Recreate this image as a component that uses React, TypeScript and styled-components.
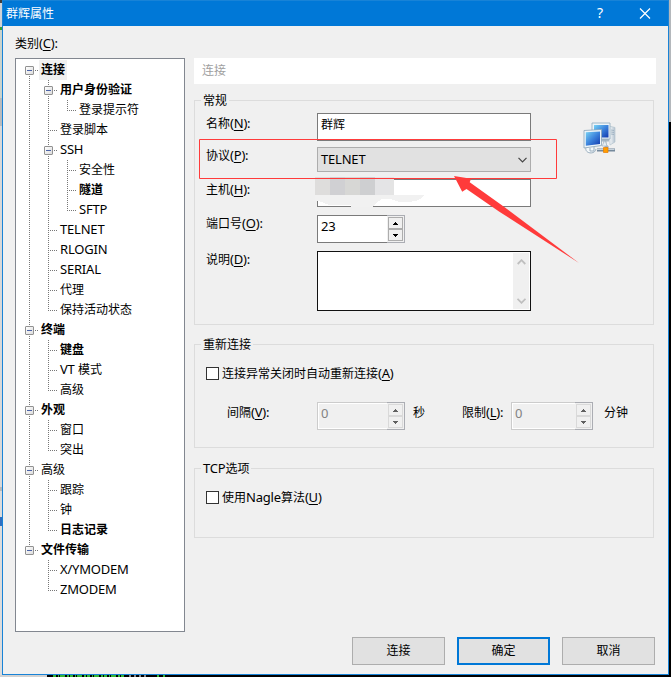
import React from "react";
import styled, { createGlobalStyle, css } from "styled-components";

const GlobalStyle = createGlobalStyle`
  * { box-sizing: border-box; }
  body {
    margin: 0;
    overflow: hidden;
    background: #000;
    color: #000;
    font: 12px/18px "Noto Sans CJK SC", sans-serif;
  }
`;

/* ---------- text ---------- */

const Latin = styled.span`
  font-family: "Noto Sans", sans-serif;
  font-size: 13px;
  line-height: 1;
  letter-spacing: -0.2px;
`;

const Key = styled.span`
  text-decoration: underline;
  text-underline-offset: 2px;
`;

function Mixed({ children }: { children: string }) {
  return (
    <>
      {children.split(/([A-Za-z0-9/]+)/).map((part, i) => (i % 2 ? <Latin key={i}>{part}</Latin> : part))}
    </>
  );
}

function Mnemonic({ text, hotkey, colon }: { text: string; hotkey: string; colon?: boolean }) {
  return (
    <>
      <Mixed>{text}</Mixed>
      <Latin>
        (<Key>{hotkey}</Key>){colon ? ":" : ""}
      </Latin>
    </>
  );
}

/* ---------- window ---------- */

const Desktop = styled.div`
  width: 671px;
  height: 677px;
  padding: 0 2px 2px;
  position: relative;
  background:
    linear-gradient(#b4b8bc 0 122px, #000 122px) right / 2px 100% no-repeat,
    linear-gradient(90deg, #d2d2d2 47px, #000 47px) bottom / 100% 2px no-repeat,
    linear-gradient(#3c3c3c 0 3px, #cfd3d7 3px 27px, #35a035 27px 30px, #cbd3cc 30px 98px, #b9bbbd 98px 126px,
      #d8d8d8 126px 487px, #b9b9b9 487px 491px, #dcdcdc 491px 517px, #2f6fc0 517px 526px, #dcdcdc 526px) left / 2px 100% no-repeat;
`;

const TerminalEdge = styled.svg`
  position: absolute;
  left: 53px;
  bottom: 0;
`;

const Dialog = styled.div`
  height: 675px;
  border: 1px solid #1883d7;
  background: #f0f0f0;
  display: flex;
  flex-direction: column;
`;

const TitleBar = styled.header`
  height: 25px;
  flex: none;
  display: flex;
  align-items: center;
  padding: 0 17px 0 3px;
  background: #0078d7;
  color: #fff;
`;

const Title = styled.span`
  flex: 1;
  padding-bottom: 2px;
`;

const HelpButton = styled.span`
  font: 14px/18px "Noto Sans", sans-serif;
  width: 42px;
  padding-bottom: 2px;
`;

const Body = styled.main`
  flex: 1;
  display: grid;
  grid-template-columns: 170px 462px;
  column-gap: 9px;
  padding: 8px 12px 0;
  align-content: start;
`;

const CategoryLabel = styled.div`
  grid-column: 1 / -1;
  height: 24px;
`;

/* ---------- tree ---------- */

const TreeBox = styled.div`
  height: 574px;
  background: #fff;
  border: 1px solid #828790;
  padding: 1px 0 0 4px;
`;

const TreeRow = styled.div`
  display: flex;
  height: 20px;
`;

const vDots = "repeating-linear-gradient(180deg, #777 0 1px, transparent 1px 2px)";
const hDots = "repeating-linear-gradient(90deg, #777 0 1px, transparent 1px 2px)";

const Guide = styled.span<{ $kind: "none" | "pass" | "tee" | "end" | "first" }>`
  width: 19px;
  height: 20px;
  flex: none;
  display: flex;
  align-items: center;
  padding-left: 5px;
  ${(p) => p.$kind === "pass" && css`background: ${vDots} 9px 0 / 1px 20px no-repeat;`}
  ${(p) => p.$kind === "tee" && css`background: ${vDots} 9px 0 / 1px 20px no-repeat, ${hDots} 11px 10px / 7px 1px no-repeat;`}
  ${(p) => p.$kind === "end" && css`background: ${vDots} 9px 0 / 1px 11px no-repeat, ${hDots} 11px 10px / 7px 1px no-repeat;`}
  ${(p) => p.$kind === "first" && css`background: ${vDots} 9px 10px / 1px 10px no-repeat, ${hDots} 11px 10px / 7px 1px no-repeat;`}
`;

const Expander = styled.span`
  width: 9px;
  height: 9px;
  margin-top: 1px;
  border: 1px solid #919191;
  border-radius: 1px;
  background: linear-gradient(#4b63a7, #4b63a7) center / 5px 1px no-repeat, linear-gradient(135deg, #fff, #dcdcdc);
`;

const NodeLabel = styled.span<{ $bold?: boolean; $selected?: boolean }>`
  padding: 0 2px;
  line-height: 18px;
  white-space: nowrap;
  font-weight: ${(p) => (p.$bold ? 700 : 400)};
  background: ${(p) => (p.$selected ? "#f0f0f0" : "transparent")};
`;

type Node = { label: string; bold?: boolean; selected?: boolean; children?: Node[] };

const tree: Node[] = [
  {
    label: "连接", bold: true, selected: true,
    children: [
      { label: "用户身份验证", bold: true, children: [{ label: "登录提示符" }] },
      { label: "登录脚本" },
      { label: "SSH", children: [{ label: "安全性" }, { label: "隧道", bold: true }, { label: "SFTP" }] },
      { label: "TELNET" },
      { label: "RLOGIN" },
      { label: "SERIAL" },
      { label: "代理" },
      { label: "保持活动状态" },
    ],
  },
  { label: "终端", bold: true, children: [{ label: "键盘", bold: true }, { label: "VT\u200A 模式" }, { label: "高级" }] },
  { label: "外观", bold: true, children: [{ label: "窗口" }, { label: "突出" }] },
  { label: "高级", children: [{ label: "跟踪" }, { label: "钟" }, { label: "日志记录", bold: true }] },
  { label: "文件传输", bold: true, children: [{ label: "X/YMODEM" }, { label: "ZMODEM" }] },
];

function Branch({ nodes, trail = [] }: { nodes: Node[]; trail?: boolean[] }) {
  return (
    <>
      {nodes.map((n, i) => {
        const last = i === nodes.length - 1;
        const first = i === 0 && trail.length === 0;
        return (
          <React.Fragment key={n.label}>
            <TreeRow>
              {trail.map((on, k) => <Guide key={k} $kind={on ? "pass" : "none"} />)}
              <Guide $kind={first ? "first" : last ? "end" : "tee"}>{n.children && <Expander />}</Guide>
              <NodeLabel $bold={n.bold} $selected={n.selected}><Mixed>{n.label}</Mixed></NodeLabel>
            </TreeRow>
            {n.children && <Branch nodes={n.children} trail={[...trail, !last]} />}
          </React.Fragment>
        );
      })}
    </>
  );
}

/* ---------- settings ---------- */

const Settings = styled.section`
  display: flex;
  flex-direction: column;
`;

const PageHeading = styled.div`
  height: 26px;
  padding: 3px 8px;
  background: #fff;
  color: #a0a0a0;
`;

const Group = styled.section<{ $top: number; $height: number }>`
  position: relative;
  display: flex;
  flex-direction: column;
  width: 460px;
  height: ${(p) => p.$height}px;
  margin-top: ${(p) => p.$top}px;
  padding-left: 11px;
  border: 1px solid #dcdcdc;
`;

const Legend = styled.h2`
  align-self: flex-start;
  height: 18px;
  margin: -10px 0 1px -5px;
  padding: 0 2px;
  font: inherit;
  background: #f0f0f0;
`;

const Field = styled.div<{ $gap: number }>`
  display: flex;
  align-items: flex-start;
  margin-top: ${(p) => p.$gap}px;
`;

const FieldLabel = styled.label<{ $drop?: number; $width?: number; $indent?: number }>`
  width: ${(p) => p.$width ?? 111}px;
  height: 18px;
  padding-left: ${(p) => p.$indent ?? 0}px;
  margin-top: ${(p) => p.$drop ?? -1}px;
  white-space: nowrap;
  flex: none;
`;

const TextBox = styled.div`
  position: relative;
  width: 214px;
  height: 28px;
  padding: 1px 3px;
  background: #fff;
  border: 1px solid #7a7a7a;
`;

const Combo = styled.div`
  width: 214px;
  height: 25px;
  display: flex;
  align-items: center;
  justify-content: space-between;
  padding: 0 3px;
  background: #e1e1e1;
  border: 1px solid #adadad;
`;

const Spin = styled.div<{ $width: number; $disabled?: boolean }>`
  display: flex;
  width: ${(p) => p.$width}px;
  height: 28px;
  color: ${(p) => (p.$disabled ? "#838383" : "#000")};
  --edge: ${(p) => (p.$disabled ? "#ccc" : "#7a7a7a")};
  --inner: ${(p) => (p.$disabled ? "#d9d9d9" : "#adadad")};
  --fill: ${(p) => (p.$disabled ? "#f0f0f0" : "#fff")};
`;

const SpinValue = styled.span`
  flex: 1;
  padding: 1px 3px;
  background: var(--fill);
  border: 1px solid var(--edge);
  border-right: 0;
  box-shadow: inset 0 1px #fff, inset 0 -1px #fff, inset 1px 0 #fff;
`;

const SpinButtons = styled.span`
  width: 18px;
  padding: 1px;
  display: flex;
  flex-direction: column;
  background: #f0f0f0;
  border: 1px solid #abadb3;
  border-left: 0;
`;

const SpinButton = styled.span`
  flex: 1;
  width: 15px;
  display: flex;
  align-items: center;
  justify-content: center;
  border: 1px solid var(--inner);
  background: #f0f0f0;
`;

const Memo = styled.div`
  width: 214px;
  height: 60px;
  padding: 1px;
  display: flex;
  justify-content: flex-end;
  background: #fff;
  border: 1px solid #111;
`;

const ScrollTrack = styled.div`
  width: 16px;
  height: 56px;
  display: flex;
  flex-direction: column;
  align-items: center;
  justify-content: space-between;
  padding: 6px 0 5px;
  background: #f0f0f0;
`;

const CheckRow = styled.label<{ $gap: number }>`
  display: flex;
  align-items: center;
  gap: 3px;
  height: 18px;
  margin-top: ${(p) => p.$gap}px;
`;

const CheckSquare = styled.span`
  width: 13px;
  height: 13px;
  margin-top: 1px;
  background: #fff;
  border: 1px solid #333;
`;

const Unit = styled.span<{ $width: number; $indent: number }>`
  width: ${(p) => p.$width}px;
  padding-left: ${(p) => p.$indent}px;
  margin-top: 1px;
`;

const Mosaic = styled.svg`
  position: absolute;
  left: -3px;
  top: -4px;
`;

const HostIcon = styled.svg`
  position: absolute;
  left: 388px;
  top: 20px;
`;

const Annotation = styled.svg`
  position: absolute;
  left: 4px;
  top: 38px;
  pointer-events: none;
`;

const Actions = styled.footer`
  display: flex;
  justify-content: flex-end;
  gap: 12px;
  padding: 0 13px 9px 0;
`;

const PushButton = styled.button<{ $primary?: boolean }>`
  width: 93px;
  height: 28px;
  padding: 0 0 2px;
  font: inherit;
  color: #000;
  background: #e1e1e1;
  border: ${(p) => (p.$primary ? "2px solid #0078d7" : "1px solid #adadad")};
`;

function Chevron({ up, color, bold }: { up?: boolean; color: string; bold?: boolean }) {
  return (
    <svg width="9" height="6" viewBox="0 0 9 6" fill="none" stroke={color} strokeWidth={bold ? 1.8 : 1.2}>
      <path d={up ? "M.7 5 4.5 1.2 8.3 5" : "M.5 .8 4.5 4.8 8.5 .8"} />
    </svg>
  );
}

function Spinner({ value, width, disabled }: { value: string; width: number; disabled?: boolean }) {
  const fill = disabled ? "#606060" : "#000";
  return (
    <Spin $width={width} $disabled={disabled}>
      <SpinValue><Latin>{value}</Latin></SpinValue>
      <SpinButtons>
        <SpinButton><svg width="5" height="3"><path d="M0 3V2H1V1H2V0H3V1H4V2H5V3Z" fill={fill} /></svg></SpinButton>
        <SpinButton><svg width="5" height="3"><path d="M0 0V1H1V2H2V3H3V2H4V1H5V0Z" fill={fill} /></svg></SpinButton>
      </SpinButtons>
    </Spin>
  );
}

function Computers() {
  return (
    <HostIcon width="34" height="36" viewBox="0 0 34 36">
      <defs>
        <linearGradient id="screen" x1="0" y1="0" x2="1" y2="1">
          <stop offset="0" stopColor="#79d3f4" />
          <stop offset=".5" stopColor="#3c83dc" />
          <stop offset="1" stopColor="#1239ad" />
        </linearGradient>
        <linearGradient id="metal" x1="0" x2="1">
          <stop offset="0" stopColor="#fff" />
          <stop offset="1" stopColor="#b3c2cf" />
        </linearGradient>
      </defs>
      <path d="M26 5 32 6.500V21L27 24Z" fill="url(#metal)" stroke="#b5c4cf" strokeWidth=".7" />
      <path d="M28 9 31 9.500M28 11 31 11.500M28 13 31 13.500" stroke="#8fa6b8" strokeWidth=".7" />
      <path d="M22 18V24L25 27M18 19H26" stroke="#a8b7c4" strokeWidth="3" fill="none" />
      <path d="M9 2H27V18H9Z" fill="#eef5f9" stroke="#91a9bc" strokeWidth=".8" />
      <path d="M11 4H25.500V16.500H11Z" fill="url(#screen)" />
      <path d="M3 26C1 33 12 34 13 28M7 27V30H11V26" fill="#f4f8fa" stroke="#9bafbf" />
      <path d="M1 9.500 18.500 8.500V24.500L1 27Z" fill="#edf5fa" stroke="#8ba5b8" strokeWidth=".8" />
      <path d="M2.800 11.300 17 10.500V23L2.800 24.800Z" fill="url(#screen)" />
      <path d="M14 29H32" stroke="#75899c" strokeWidth="3" />
      <path d="M14 28.500H31.500" stroke="#c8d3dc" strokeWidth="1" />
      <path d="M19 25 22 19 24 25Z" fill="#e7eef2" stroke="#8da2b2" strokeWidth=".5" />
      <path d="M20.500 26.500H25V31.500H20.500Z" fill="#ff9d00" stroke="#e77b00" strokeWidth=".7" />
    </HostIcon>
  );
}

export default function App() {
  return (
    <>
      <GlobalStyle />
      <Desktop>
        <Dialog>
          <TitleBar>
            <Title>群辉属性</Title>
            <HelpButton>?</HelpButton>
            <svg width="12" height="12" viewBox="0 0 12 12" stroke="#fff" strokeWidth="1.2">
              <path d="M1 .5 11 10.500M11 .5 1 10.500" />
            </svg>
          </TitleBar>
          <Body>
            <CategoryLabel><Mnemonic text="类别" hotkey="C" colon /></CategoryLabel>
            <TreeBox><Branch nodes={tree} /></TreeBox>
            <Settings>
              <PageHeading>连接</PageHeading>
              <Group $top={16} $height={225}>
                <Legend>常规</Legend>
                <Field $gap={3}>
                  <FieldLabel $drop={1}><Mnemonic text="名称" hotkey="N" colon /></FieldLabel>
                  <TextBox>群辉</TextBox>
                </Field>
                <Field $gap={6}>
                  <FieldLabel><Mnemonic text="协议" hotkey="P" colon /></FieldLabel>
                  <Combo><Latin>TELNET</Latin><Chevron color="#444" /></Combo>
                </Field>
                <Field $gap={7}>
                  <FieldLabel $drop={1}><Mnemonic text="主机" hotkey="H" colon /></FieldLabel>
                  <TextBox>
                    <Mosaic width="112" height="32" shapeRendering="crispEdges">
                      <path d="M2 19H79V1H2Z" fill="#e4e4e4" />
                      <path d="M0 1H15V19H0Z" fill="#dedddc" />
                      <path d="M15 1H30V19H15Z" fill="#d0d0d3" />
                      <path d="M30 1H45V19H30Z" fill="#d7d7d5" />
                      <path d="M45 1H60V19H45Z" fill="#cecfd1" />
                      <path d="M60 1H75V19H60Z" fill="#e4e4e6" />
                      <path d="M0 19H109Q106 25 94 26Q84 27 75 23Q66 22 64 25L57 31H36V29H14L4 25H0Z" fill="#f1f1f1" />
                    </Mosaic>
                  </TextBox>
                </Field>
                <Field $gap={8}>
                  <FieldLabel><Mnemonic text="端口号" hotkey="O" colon /></FieldLabel>
                  <Spinner value="23" width={88} />
                </Field>
                <Field $gap={8}>
                  <FieldLabel><Mnemonic text="说明" hotkey="D" colon /></FieldLabel>
                  <Memo>
                    <ScrollTrack>
                      <Chevron up bold color="#bfbfbf" />
                      <Chevron bold color="#bfbfbf" />
                    </ScrollTrack>
                  </Memo>
                </Field>
                <Computers />
                <Annotation width="382" height="126">
                  <path d="M.5 .5H357.500V39.500H.5Z" fill="none" stroke="#ff3b3b" />
                  <path d="M255 37 272 39.700 270.700 43.300 306 68.500 380 124 300 72.500 267.500 50 263.200 52.800Z" fill="#ff3b3b" />
                </Annotation>
              </Group>
              <Group $top={19} $height={104}>
                <Legend>重新连接</Legend>
                <CheckRow $gap={10}>
                  <CheckSquare />
                  <span><Mnemonic text="连接异常关闭时自动重新连接" hotkey="A" /></span>
                </CheckRow>
                <Field $gap={20}>
                  <FieldLabel $indent={21} $drop={1}><Mnemonic text="间隔" hotkey="V" colon /></FieldLabel>
                  <Spinner value="0" width={88} disabled />
                  <Unit $width={57} $indent={8}>秒</Unit>
                  <FieldLabel $width={49} $drop={1}><Mnemonic text="限制" hotkey="L" colon /></FieldLabel>
                  <Spinner value="0" width={82} disabled />
                  <Unit $width={50} $indent={11}>分钟</Unit>
                </Field>
              </Group>
              <Group $top={20} $height={70}>
                <Legend><Mixed>TCP选项</Mixed></Legend>
                <CheckRow $gap={10}>
                  <CheckSquare />
                  <span><Mnemonic text="使用Nagle算法" hotkey="U" /></span>
                </CheckRow>
              </Group>
            </Settings>
          </Body>
          <Actions>
            <PushButton>连接</PushButton>
            <PushButton $primary>确定</PushButton>
            <PushButton>取消</PushButton>
          </Actions>
        </Dialog>
        <TerminalEdge width="114" height="2" fill="none" strokeWidth="2">
          <path d="M0 1H72" stroke="#35b535" strokeDasharray="3 2 1 1 5 2 2 1" />
          <path d="M76 1H96" stroke="#888" strokeDasharray="2 3" />
          <path d="M104 1H112" stroke="#35b535" strokeDasharray="2 4" />
        </TerminalEdge>
      </Desktop>
    </>
  );
}
